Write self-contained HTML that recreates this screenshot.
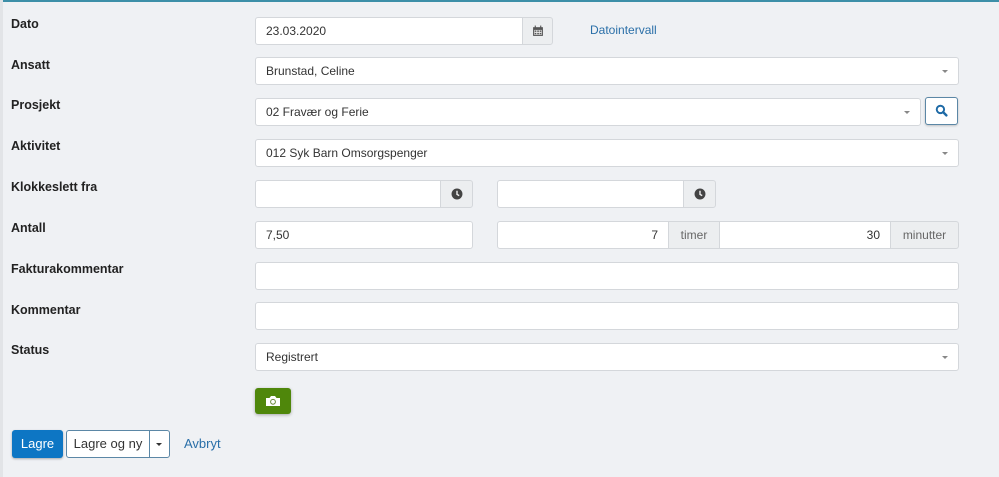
<!DOCTYPE html>
<html><head><meta charset="utf-8"><style>
*{box-sizing:border-box;margin:0;padding:0}
body{width:999px;height:477px;background:#eff1f4;font-family:"Liberation Sans",sans-serif;position:relative;overflow:hidden;color:#333}
.top{position:absolute;left:0;top:0;width:999px;height:2px;background:#3d8fa8}
.lb{position:absolute;left:0;top:0;width:3px;height:477px;background:#e2e4e7}
.lab{position:absolute;left:11px;font-size:12.5px;font-weight:bold;color:#222}
.in{position:absolute;height:28px;background:#fff;border:1px solid #d4d7db;border-radius:3px;font-size:12px;line-height:26px;padding-left:10px;color:#333}
.ad{position:absolute;height:28px;background:#eceef0;border:1px solid #d4d7db;font-size:12px;line-height:26px;text-align:center;color:#666}
.car{position:absolute;right:10px;top:12px;border-left:3px solid transparent;border-right:3px solid transparent;border-top:3px solid #888}
.btn{position:absolute;height:28px;border-radius:3px;font-size:13px;line-height:26px;text-align:center}
</style></head><body>
<div class="top"></div><div class="lb"></div>

<div class="lab" style="top:17px">Dato</div>
<div class="in" style="left:255px;top:17px;width:268px;border-radius:3px 0 0 3px">23.03.2020</div>
<div class="ad" style="left:522px;top:17px;width:31px;border-radius:0 3px 3px 0"><svg width="12" height="12" viewBox="0 0 11 11" style="margin-top:7px"><rect x="1" y="2" width="9" height="8" fill="#555"/><rect x="2" y="4.5" width="7" height="4.5" fill="#eee"/><rect x="2.5" y="5" width="1.5" height="1.3" fill="#555"/><rect x="4.8" y="5" width="1.5" height="1.3" fill="#555"/><rect x="7" y="5" width="1.5" height="1.3" fill="#555"/><rect x="2.5" y="7.2" width="1.5" height="1.3" fill="#555"/><rect x="4.8" y="7.2" width="1.5" height="1.3" fill="#555"/><rect x="7" y="7.2" width="1.5" height="1.3" fill="#555"/><rect x="2.5" y="0.5" width="1" height="2.5" fill="#555"/><rect x="7.5" y="0.5" width="1" height="2.5" fill="#555"/></svg></div>
<div style="position:absolute;left:590px;top:23px;font-size:12px;color:#2a6fa8">Datointervall</div>

<div class="lab" style="top:58px">Ansatt</div>
<div class="in" style="left:255px;top:57px;width:704px">Brunstad, Celine<span class="car"></span></div>

<div class="lab" style="top:98px">Prosjekt</div>
<div class="in" style="left:255px;top:98px;width:666px">02 Fravær og Ferie<span class="car"></span></div>
<div class="btn" style="left:925px;top:97px;width:33px;background:#fff;border:1px solid #5b87a6;box-shadow:0 1px 2px rgba(0,0,0,.2)"><svg width="13" height="13" viewBox="0 0 12 12" style="margin-top:6px"><circle cx="5" cy="5" r="3.4" fill="none" stroke="#1e6aa6" stroke-width="1.8"/><path d="M7.5 7.5L10.5 10.5" stroke="#1e6aa6" stroke-width="2.2" stroke-linecap="round"/></svg></div>

<div class="lab" style="top:139px">Aktivitet</div>
<div class="in" style="left:255px;top:139px;width:704px">012 Syk Barn Omsorgspenger<span class="car"></span></div>

<div class="lab" style="top:180px">Klokkeslett fra</div>
<div class="in" style="left:255px;top:180px;width:186px;border-radius:3px 0 0 3px"></div>
<div class="ad" style="left:440px;top:180px;width:33px;border-radius:0 3px 3px 0"><svg width="12" height="12" viewBox="0 0 11 11" style="margin-top:7px"><circle cx="5.5" cy="5.5" r="5" fill="#444"/><path d="M5.5 2.5V5.8L7.5 7" stroke="#eee" stroke-width="1.3" fill="none"/></svg></div>
<div class="in" style="left:497px;top:180px;width:187px;border-radius:3px 0 0 3px"></div>
<div class="ad" style="left:683px;top:180px;width:33px;border-radius:0 3px 3px 0"><svg width="12" height="12" viewBox="0 0 11 11" style="margin-top:7px"><circle cx="5.5" cy="5.5" r="5" fill="#444"/><path d="M5.5 2.5V5.8L7.5 7" stroke="#eee" stroke-width="1.3" fill="none"/></svg></div>

<div class="lab" style="top:221px">Antall</div>
<div class="in" style="left:255px;top:221px;width:218px">7,50</div>
<div class="in" style="left:497px;top:221px;width:172px;border-radius:3px 0 0 3px;text-align:right;padding-right:10px">7</div>
<div class="ad" style="left:668px;top:221px;width:52px">timer</div>
<div class="in" style="left:719px;top:221px;width:172px;border-radius:0;text-align:right;padding-right:10px">30</div>
<div class="ad" style="left:890px;top:221px;width:69px;border-radius:0 3px 3px 0">minutter</div>

<div class="lab" style="top:262px">Fakturakommentar</div>
<div class="in" style="left:255px;top:262px;width:704px"></div>

<div class="lab" style="top:303px">Kommentar</div>
<div class="in" style="left:255px;top:302px;width:704px"></div>

<div class="lab" style="top:343px">Status</div>
<div class="in" style="left:255px;top:343px;width:704px">Registrert<span class="car"></span></div>

<div class="btn" style="left:255px;top:388px;width:36px;height:26px;background:#4f870b;box-shadow:0 1px 3px rgba(0,0,0,.3)"><svg width="16" height="12" viewBox="0 0 16 12" style="margin-top:7px"><path d="M1 3H4.5L6 1H10L11.5 3H15V11H1Z" fill="#fff"/><circle cx="8" cy="6.8" r="2.4" fill="none" stroke="#6a8a3a" stroke-width="1"/></svg></div>

<div class="btn" style="left:12px;top:430px;width:51px;background:#0d76c4;color:#fff;line-height:28px;box-shadow:0 1px 2px rgba(0,0,0,.3)">Lagre</div>
<div class="btn" style="left:66px;top:430px;width:84px;background:#fff;border:1px solid #5b87a6;border-radius:3px 0 0 3px;color:#333">Lagre og ny</div>
<div class="btn" style="left:149px;top:430px;width:21px;background:#fff;border:1px solid #5b87a6;border-radius:0 3px 3px 0"><span style="position:absolute;left:6px;top:12px;border-left:3px solid transparent;border-right:3px solid transparent;border-top:3px solid #333"></span></div>
<div style="position:absolute;left:184px;top:436px;font-size:13px;color:#2a6fa8">Avbryt</div>
</body></html>
